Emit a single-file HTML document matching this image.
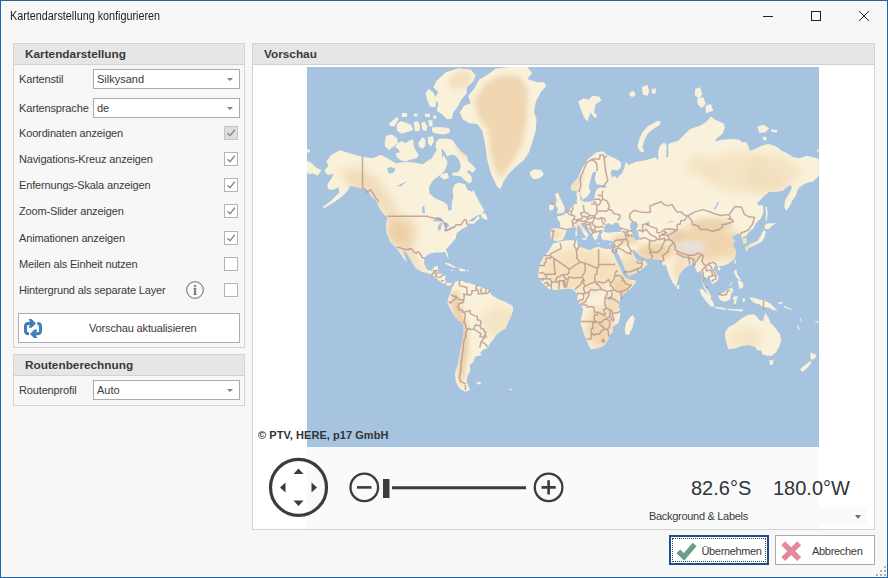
<!DOCTYPE html>
<html lang="de"><head><meta charset="utf-8"><title>Kartendarstellung konfigurieren</title>
<style>
*{box-sizing:border-box;margin:0;padding:0}
html,body{width:888px;height:578px;overflow:hidden;background:#f7f7f7}
body{font-family:"Liberation Sans","DejaVu Sans",sans-serif;font-size:11px;color:#3a3a3a;position:relative}
.abs{position:absolute}
#win{position:absolute;left:0;top:0;width:888px;height:578px;border:1px solid #1b66b3;border-top-color:#2a5f9a;background:#f7f7f7}
.t{position:absolute;white-space:nowrap;line-height:14px;height:14px;letter-spacing:-0.15px}
.grp{position:absolute;border:1px solid #d2d2d2;background:#f7f7f7}
.hd{position:absolute;left:0;top:0;right:0;height:21px;background:#e6e6e6;border-bottom:1px solid #d2d2d2}
.hd span{position:absolute;left:11px;top:3px;font-weight:bold;font-size:11.8px;line-height:14px;color:#3a3a3a;white-space:nowrap}
.cb{position:absolute;height:20px;background:#fff;border:1px solid #ababab}
.cb span{position:absolute;left:3px;top:2px;line-height:14px;white-space:nowrap}
.cb i{position:absolute;right:6.5px;top:8px;width:0;height:0;border-left:3.5px solid transparent;border-right:3.5px solid transparent;border-top:3.5px solid #808080}
.ck{position:absolute;left:223px;width:14px;height:14px;background:#fff;border:1px solid #b4b4b4}
.ck.dis{background:#dedede;border-color:#c4c4c4}
.ck svg{position:absolute;left:0;top:0}
.btn{position:absolute;background:#fff;border:1px solid #ababab}
</style></head><body>
<div id="win">
<div class="t" style="left:9px;top:7.700px;font-size:12px;letter-spacing:0;transform:scaleX(.9);transform-origin:0 0;color:#222" id="title">Kartendarstellung konfigurieren</div>
<svg class="abs" style="left:754px;top:-1px" width="132" height="32" viewBox="755 0 132 32" fill="none" stroke="#222" stroke-width="1">
<path d="M763 16.5H773"/><rect x="811.5" y="11.5" width="9" height="9"/><path d="M859 11L869 21M869 11L859 21"/></svg>

<!-- left group 1 -->
<div class="grp" style="left:12px;top:42px;width:232px;height:305px">
 <div class="hd"><span id="h1">Kartendarstellung</span></div>
</div>
<div class="t" style="left:18px;top:71px" id="l1">Kartenstil</div>
<div class="cb" style="left:92px;top:68px;width:147px"><span>Silkysand</span><i></i></div>
<div class="t" style="left:18px;top:100px" id="l2">Kartensprache</div>
<div class="cb" style="left:92px;top:97px;width:147px"><span>de</span><i></i></div>
<div class="t" style="left:18px;top:125px" id="l3">Koordinaten anzeigen</div>
<div class="t" style="left:18px;top:151px" id="l4">Navigations-Kreuz anzeigen</div>
<div class="t" style="left:18px;top:177px" id="l5">Enfernungs-Skala anzeigen</div>
<div class="t" style="left:18px;top:203px" id="l6">Zoom-Slider anzeigen</div>
<div class="t" style="left:18px;top:230px" id="l7">Animationen anzeigen</div>
<div class="t" style="left:18px;top:256px" id="l8">Meilen als Einheit nutzen</div>
<div class="t" style="left:18px;top:282px" id="l9">Hintergrund als separate Layer</div>
<div class="ck dis" style="top:125px"><svg width="12" height="12" viewBox="0 0 12 12"><path d="M2.5 6.2L5 8.8L9.8 2.8" fill="none" stroke="#8a8a8a" stroke-width="1.4"/></svg></div>
<div class="ck" style="top:151px"><svg width="12" height="12" viewBox="0 0 12 12"><path d="M2.5 6.2L5 8.8L9.8 2.8" fill="none" stroke="#8a8a8a" stroke-width="1.4"/></svg></div>
<div class="ck" style="top:177px"><svg width="12" height="12" viewBox="0 0 12 12"><path d="M2.5 6.2L5 8.8L9.8 2.8" fill="none" stroke="#8a8a8a" stroke-width="1.4"/></svg></div>
<div class="ck" style="top:203px"><svg width="12" height="12" viewBox="0 0 12 12"><path d="M2.5 6.2L5 8.8L9.8 2.8" fill="none" stroke="#8a8a8a" stroke-width="1.4"/></svg></div>
<div class="ck" style="top:230px"><svg width="12" height="12" viewBox="0 0 12 12"><path d="M2.5 6.2L5 8.8L9.8 2.8" fill="none" stroke="#8a8a8a" stroke-width="1.4"/></svg></div>
<div class="ck" style="top:256px"></div>
<div class="ck" style="top:282px"></div>
<svg class="abs" style="left:183.100px;top:278.200px" width="22" height="22" viewBox="0 0 22 22"><circle cx="11" cy="11" r="8.3" fill="#fbfbfb" stroke="#888" stroke-width="1.3"/><text x="11" y="15.800" font-family="Liberation Serif,serif" font-weight="bold" font-size="14" text-anchor="middle" fill="#777">i</text></svg>
<div class="btn" style="left:17px;top:312px;width:222px;height:30px">
 <svg class="abs" style="left:4.900px;top:4.900px" width="18" height="19.4" viewBox="0 0 18 19.4" fill="none" stroke="#3f7dbb" stroke-width="3"><path d="M7 4.600H4.500Q1.500 4.600 1.500 7.600V11.800Q1.500 14.800 4.500 14.800H5"/><path d="M11 14.800H13.500Q16.500 14.800 16.500 11.800V7.600Q16.500 4.600 13.500 4.600H13.300"/><path d="M4.600 0H7.600L12 4.400L7.600 8.800H4.600L6.600 4.400Z" fill="#3f7dbb" stroke="none"/><path d="M13.400 10.600H10.400L6 15L10.400 19.400H13.400L11.400 15Z" fill="#3f7dbb" stroke="none"/></svg>
 <div class="t" style="left:70px;top:7px" id="b1">Vorschau aktualisieren</div>
</div>

<!-- left group 2 -->
<div class="grp" style="left:12px;top:353px;width:232px;height:52px">
 <div class="hd"><span id="h2">Routenberechnung</span></div>
</div>
<div class="t" style="left:18px;top:382px" id="l10">Routenprofil</div>
<div class="cb" style="left:92px;top:379px;width:147px"><span>Auto</span><i></i></div>

<!-- right group -->
<div class="grp" style="left:251px;top:42px;width:623px;height:487px;background:#fff">
 <div class="hd"><span id="h3">Vorschau</span></div>
</div>
<div class="abs" style="left:306px;top:446px;width:512px;height:82px;background:#f8fafc"></div>
<!--MAP-->
<svg class="abs" id="map" style="left:306px;top:66px" width="512" height="380" viewBox="0 0 512 380">
<defs><filter id="fb1" x="-20%" y="-20%" width="140%" height="140%"><feGaussianBlur stdDeviation="5"/></filter><filter id="fb2" x="-20%" y="-20%" width="140%" height="140%"><feGaussianBlur stdDeviation="2.5"/></filter><clipPath id="lc"><path d="M152.8,45.3 157.0,38.7 163.7,36.2 161.2,28.7 167.0,22.0 172.0,12.8 180.3,7.8 188.7,1.7 202.0,0.0 220.3,0.0 225.3,6.2 220.3,12.0 230.3,15.3 237.0,15.3 239.5,18.7 233.7,25.3 228.7,35.3 227.0,45.3 229.5,52.0 228.7,63.7 225.3,75.3 222.0,85.3 217.0,93.0 209.0,99.5 201.5,107.0 196.5,114.5 193.5,122.0 190.0,119.5 184.0,107.0 180.0,92.0 179.5,87.0 177.8,75.3 175.3,63.7 170.3,57.0 162.0,56.2 155.3,52.0ZM24.0,88.0 33.2,83.3 42.3,86.3 54.8,89.7 65.7,91.3 74.0,87.7 79.0,90.5 89.0,96.3 99.0,94.7 107.3,95.5 115.7,97.2 118.0,95.5 124.7,91.3 129.7,83.0 132.2,78.0 134.7,84.7 135.5,91.3 136.9,88.0 140.6,95.5 138.1,103.0 133.1,108.0 126.2,113.0 122.2,119.7 122.2,126.3 128.0,131.3 136.3,134.7 140.5,138.0 141.3,143.8 144.7,143.0 144.7,136.3 146.3,129.7 145.5,123.0 147.2,118.0 151.3,115.5 158.0,117.2 160.5,123.0 164.7,124.7 166.3,123.0 169.7,129.7 173.0,136.3 177.2,143.0 174.7,147.2 169.7,148.8 165.5,151.3 161.3,154.3 166.3,154.3 171.3,148.8 173.0,151.3 168.8,154.7 166.3,157.2 161.3,156.3 159.7,159.7 154.7,162.2 149.7,166.3 148.8,171.3 144.7,176.3 138.8,182.2 140.5,186.3 141.7,192.2 139.7,188.8 138.0,184.7 134.7,185.5 128.0,185.5 121.3,187.2 117.2,191.3 117.2,197.2 120.5,203.0 124.7,203.8 127.2,199.7 130.5,198.8 131.3,203.0 130.5,206.3 136.3,207.2 138.8,208.8 138.0,213.0 139.7,216.3 143.0,216.0 145.5,216.3 144.7,218.0 141.3,218.8 137.2,217.2 131.3,213.0 126.3,208.8 121.3,206.3 114.7,204.7 108.8,201.3 104.7,194.7 99.7,186.3 95.5,183.0 98.0,189.7 100.0,195.5 96.3,191.3 92.2,184.7 88.8,180.5 83.0,174.7 79.7,166.3 78.8,158.0 80.5,149.7 78.2,148.8 72.3,141.3 69.8,134.7 64.8,129.7 60.7,123.8 54.8,121.7 49.0,120.0 43.2,118.8 40.7,123.8 34.8,129.7 25.7,136.3 16.5,141.3 15.7,140.0 24.0,133.8 32.3,125.5 31.5,120.0 26.5,122.7 21.0,122.2 20.3,117.2 24.0,112.2 26.5,106.7 20.7,108.0 17.3,103.8 21.5,98.8 19.3,94.7ZM0.0,93.8 4.0,95.5 9.0,100.5 14.3,103.0 10.7,108.8 5.7,106.3 1.5,107.2 0.0,104.7ZM0.0,82.2 3.2,82.7 2.7,85.5 0.0,85.5ZM173.8,148.0 177.2,145.5 179.7,148.8 180.5,153.0 177.2,152.2 174.7,150.5ZM137.2,196.3 141.3,196.0 146.3,198.8 150.5,201.0 146.3,200.5 141.3,198.3ZM151.3,201.3 158.0,202.2 158.8,204.3 153.0,204.3ZM143.8,202.7 146.3,202.7 146.3,203.7 143.8,203.7ZM159.7,203.3 161.7,203.3 161.7,204.3 159.7,204.3ZM128.8,75.5 131.9,71.8 138.8,71.5 145.6,73.0 148.8,78.0 153.8,84.2 160.0,89.2 161.2,94.2 166.9,99.2 168.8,102.0 165.6,106.1 161.9,103.0 160.0,104.9 164.4,109.2 165.0,114.2 161.9,116.5 157.5,113.0 153.8,109.2 145.6,108.6 145.0,106.1 151.2,104.9 153.8,100.5 153.1,95.5 151.2,91.8 147.5,88.0 143.8,88.0 140.0,89.5 138.1,85.5 135.0,81.8 133.1,84.5 130.6,84.9 128.8,80.5ZM133.8,106.8 140.6,106.1 141.9,111.1 136.9,112.4 133.1,109.9ZM129.7,13.7 138.8,5.3 151.3,1.2 163.8,2.8 168.8,8.7 165.5,15.3 159.7,20.3 159.7,26.2 154.7,32.0 151.3,38.7 146.3,45.3 144.7,52.0 139.7,52.0 134.7,47.0 129.7,43.7 131.3,37.0 128.0,30.3 131.3,25.3 126.3,20.3ZM121.3,22.0 126.3,25.3 129.7,33.7 128.0,40.3 123.0,39.5 119.7,32.0 118.8,26.2ZM79.2,68.6 84.9,67.4 89.9,71.1 91.1,75.5 86.8,79.2 81.8,83.0 78.0,79.2 77.8,74.2ZM89.9,76.8 94.2,74.2 99.2,76.1 103.0,73.0 106.1,72.4 106.8,79.2 109.2,84.2 111.8,88.0 109.9,91.1 104.2,92.4 99.2,94.2 94.2,93.6 89.9,90.5 88.6,86.1 93.0,85.5 91.1,81.8 88.0,80.5ZM111.1,76.1 115.5,69.9 118.6,73.0 118.0,79.2 115.5,81.8 112.4,79.9ZM120.8,69.9 126.1,69.2 127.0,74.2 124.2,79.2 121.1,76.8ZM124.9,60.5 130.5,59.9 138.0,60.5 143.0,61.8 142.4,66.1 136.8,67.4 130.5,66.8 125.5,65.5ZM81.8,56.8 89.9,49.9 91.8,51.8 87.4,59.2 83.6,59.2ZM89.9,56.8 93.6,54.2 98.6,55.5 104.2,58.0 106.1,63.0 100.5,64.9 94.2,66.8 89.9,63.6ZM106.8,54.9 111.1,54.2 113.0,59.2 112.4,64.2 108.0,64.2ZM114.2,55.5 118.0,54.9 120.5,59.2 119.2,64.2 115.5,63.0ZM121.1,53.0 125.5,53.6 125.5,59.2 122.4,59.2ZM94.9,46.1 99.9,46.1 99.9,49.9 94.9,49.9ZM106.8,46.8 110.5,46.8 110.5,49.2 106.8,49.2ZM118.0,46.8 123.0,46.8 123.0,49.9 118.0,49.9ZM126.1,48.6 129.2,48.6 129.2,51.8 126.1,51.8ZM145.5,218.8 148.8,214.7 153.8,213.0 158.0,215.5 163.0,216.3 170.5,218.8 176.3,221.3 181.3,222.2 184.7,228.0 191.3,232.2 198.0,234.7 205.5,238.8 206.3,243.0 203.8,249.7 201.3,254.7 198.8,261.3 194.7,263.8 189.7,267.2 187.2,271.3 183.0,276.3 180.5,281.3 175.5,283.0 173.0,286.3 175.5,288.0 168.0,289.7 166.3,294.7 163.0,298.0 163.0,304.7 160.5,308.8 159.7,314.7 163.0,323.0 158.0,324.7 152.2,321.3 148.8,314.7 148.0,306.3 150.5,298.0 152.2,289.7 153.8,281.3 155.5,273.0 156.7,266.3 156.3,258.0 153.0,254.7 148.0,249.7 143.8,243.0 140.5,236.3 141.3,231.3 143.8,224.7ZM169.7,315.0 173.8,314.7 173.8,317.2 170.0,317.3ZM202.2,321.7 204.7,322.0 204.7,323.3 202.5,323.0ZM246.0,176.5 241.8,184.0 236.8,189.8 232.7,197.3 231.8,204.0 231.3,209.0 233.5,214.0 236.8,217.3 241.0,221.5 246.0,223.2 254.3,222.3 261.0,221.5 266.0,222.3 269.3,225.7 271.0,227.3 270.2,232.3 272.7,237.3 276.0,241.3 275.2,248.0 273.0,254.7 275.2,261.3 278.5,271.3 281.8,278.8 283.5,282.2 291.0,281.3 296.8,278.8 301.0,273.0 302.7,268.0 306.0,264.7 305.2,260.5 311.0,256.3 312.7,251.3 313.5,245.5 311.8,239.7 312.7,233.0 314.3,229.7 321.0,223.0 322.7,223.2 327.7,216.5 329.3,214.0 327.7,213.2 322.7,212.7 319.0,211.0 316.0,207.7 313.2,201.0 309.8,194.3 306.7,187.3 308.0,184.0 306.8,181.5 302.7,182.3 296.0,181.5 291.0,179.8 287.7,180.7 282.7,183.2 276.0,180.7 271.0,179.8 270.2,174.0 269.3,172.3 268.5,173.2 259.3,173.2 252.7,174.8ZM326.0,248.0 327.7,252.2 325.2,261.3 321.8,268.0 318.5,267.2 317.7,262.2 319.3,255.5 322.7,250.5ZM248.5,174.0 246.0,173.0 243.5,169.2 243.5,162.4 247.9,161.1 253.5,161.8 252.9,155.5 249.8,151.1 250.4,149.2 255.4,148.6 260.4,144.9 263.5,141.8 269.3,135.5 270.2,131.3 269.3,126.3 271.8,123.0 273.5,128.0 273.0,133.0 275.2,132.2 274.0,128.0 273.0,123.8 269.3,124.3 264.7,123.5 263.5,120.5 265.2,117.2 271.0,110.5 275.2,101.3 281.0,92.2 289.3,85.5 296.0,84.3 300.2,88.0 307.7,91.3 313.5,94.7 314.3,99.7 311.0,103.5 305.2,102.7 303.5,105.5 305.2,110.7 307.7,108.8 310.2,111.7 312.3,108.3 315.3,106.3 317.3,100.5 318.7,95.0 321.8,98.0 325.2,96.3 329.3,94.7 336.0,93.8 343.0,92.0 348.0,90.3 351.3,93.0 351.3,83.7 353.0,78.7 357.2,75.3 359.7,78.7 359.3,90.3 361.3,90.3 361.3,77.0 366.3,75.3 371.3,73.7 378.0,67.0 383.0,62.0 393.0,58.7 399.7,54.5 403.8,49.5 408.0,52.8 416.3,56.2 418.0,60.3 415.5,67.0 409.7,71.2 408.0,74.5 414.7,72.8 424.7,72.0 432.2,72.8 434.7,75.3 439.7,75.3 443.0,83.7 448.0,82.0 454.7,78.7 461.3,77.0 468.0,78.7 474.7,83.7 481.3,87.0 486.3,90.3 493.0,91.2 499.7,88.7 506.3,90.3 511.8,92.0 511.8,108.8 505.7,114.7 500.7,115.5 495.7,118.0 492.3,120.5 490.7,123.0 489.0,128.0 485.7,133.0 482.3,139.7 479.0,143.8 477.3,139.7 478.2,133.0 482.3,126.3 484.8,121.3 484.0,118.0 479.0,120.5 475.7,123.8 469.0,124.7 462.3,124.7 457.3,128.8 453.2,133.0 449.8,136.3 452.3,138.8 455.7,138.0 456.5,144.7 454.0,151.3 449.0,156.3 446.5,161.3 442.3,164.7 439.0,169.0 439.8,175.7 436.5,177.3 435.3,172.3 434.0,168.2 431.5,166.5 427.3,168.2 424.8,170.7 428.2,174.0 425.7,177.3 428.2,182.3 429.0,186.3 427.7,191.3 424.3,194.7 419.8,197.5 415.7,198.8 412.3,199.3 411.0,199.3 408.2,198.3 406.5,201.3 407.7,203.8 410.2,207.2 411.5,210.5 411.0,213.3 408.2,215.5 405.5,217.2 404.0,215.0 403.2,213.0 401.0,211.3 398.5,210.0 396.5,210.8 396.0,214.7 396.8,218.0 399.3,221.3 401.8,224.7 403.5,228.0 404.3,231.3 402.3,231.3 401.0,228.0 399.0,223.8 396.8,220.5 395.7,216.3 395.2,214.7 395.7,210.5 394.8,206.3 393.5,203.3 391.5,205.5 389.8,204.8 388.5,201.7 386.7,196.8 384.0,197.8 381.5,198.5 379.7,199.7 375.5,203.0 372.2,208.0 370.5,214.7 368.8,219.7 365.5,215.5 362.2,208.0 359.7,201.3 358.8,197.2 356.3,198.8 354.7,195.5 353.8,193.0 349.7,192.2 343.0,192.2 338.0,191.3 333.0,188.8 327.2,183.0 324.7,183.8 327.2,188.8 329.7,192.7 333.0,194.7 336.3,192.2 338.0,193.8 340.5,197.2 336.3,201.3 328.8,206.3 323.0,208.3 321.7,209.3 318.8,203.8 315.5,196.0 311.7,188.0 308.3,182.2 304.5,186.2 305.3,183.4 306.5,179.7 307.5,175.9 308.3,173.4 306.3,174.2 303.0,174.0 300.5,173.0 298.0,173.4 295.5,172.6 294.2,170.5 293.8,167.2 295.1,165.5 296.3,164.7 294.7,164.9 292.2,165.7 291.5,167.6 290.5,169.8 290.1,172.2 288.4,173.4 287.6,172.6 286.3,170.7 285.1,168.0 283.8,165.9 281.3,162.2 278.0,158.8 275.1,156.3 273.8,157.0 276.3,160.5 278.8,163.8 281.3,166.8 282.0,168.0 280.7,168.5 280.3,171.2 279.2,170.5 277.3,167.7 275.2,164.3 273.2,160.2 272.3,158.0 269.7,160.5 263.8,160.5 260.5,161.5 259.7,163.4 257.9,168.0 256.0,172.4 251.6,174.2ZM222.7,104.7 227.7,102.2 234.3,103.0 236.8,107.2 232.7,111.3 226.8,112.2 223.5,108.8ZM247.9,127.4 251.0,125.5 252.9,130.5 256.0,136.8 257.9,141.8 256.6,145.5 249.8,146.8 251.0,141.8 248.5,138.0 249.8,133.0ZM242.2,138.6 245.4,135.5 247.5,138.6 246.0,143.0 242.2,143.6ZM274.2,171.2 279.7,170.9 278.8,173.0 275.5,172.6ZM268.4,163.8 270.1,163.7 270.1,169.2 268.6,169.2ZM268.8,160.5 270.0,160.5 270.0,163.2 269.0,163.2ZM289.7,175.9 293.0,175.9 293.0,176.8 289.7,176.8ZM301.8,176.8 304.2,175.9 304.0,177.2 301.9,177.3ZM322.2,25.7 326.3,23.7 328.8,27.8 325.5,30.3 322.7,28.7ZM334.7,20.3 340.5,17.8 342.2,23.7 340.5,28.7 336.0,27.8ZM344.7,22.0 348.8,21.2 348.8,26.2 345.0,26.7ZM388.0,22.0 393.0,20.3 395.5,27.0 392.2,31.2 388.0,28.7ZM390.5,31.2 396.3,30.3 398.8,37.0 394.7,41.2 390.5,37.0ZM398.8,38.7 403.8,37.0 406.3,43.7 398.8,46.2ZM350.5,53.7 353.8,54.5 353.0,57.8 346.3,62.0 340.5,67.0 337.2,73.7 335.5,80.3 337.2,85.3 333.0,84.5 330.5,79.5 332.2,72.0 335.5,65.3 340.5,59.5 346.3,56.2ZM450.5,59.5 456.3,57.8 462.2,61.2 458.8,65.3 452.2,65.7ZM463.8,62.3 470.5,63.3 469.7,65.7 464.7,65.0ZM455.5,69.5 459.7,70.3 459.3,73.7 456.0,72.8ZM510.3,82.0 511.8,82.0 511.8,84.7 510.3,84.7ZM271.2,34.5 277.0,31.2 282.0,32.8 285.3,28.7 292.0,29.5 294.5,33.7 288.7,37.0 287.0,45.3 290.3,48.7 287.8,51.2 283.7,45.3 280.3,54.5 277.0,50.3 273.7,42.0ZM458.2,139.7 459.8,139.7 460.7,146.3 459.8,153.8 458.7,153.8 459.0,146.3ZM457.3,159.0 459.8,156.5 469.0,156.0 464.8,159.0 461.5,162.3 458.2,162.3ZM456.5,163.2 459.0,164.8 457.3,170.7 454.8,174.8 449.0,177.7 443.2,180.3 439.8,182.3 439.3,179.8 444.0,176.5 450.7,174.0 454.0,168.2ZM438.2,179.8 441.0,181.0 440.7,184.3 438.7,183.7ZM427.3,193.0 428.8,193.3 428.7,197.2 427.5,196.8ZM411.0,200.3 413.2,200.0 413.3,203.0 411.8,203.8 410.8,202.5ZM426.9,203.4 429.4,203.0 430.2,207.2 432.3,210.5 434.2,212.2 432.3,213.2 429.0,209.7 427.3,206.3ZM430.7,213.2 434.0,214.0 436.5,217.2 435.7,221.3 432.3,221.8 431.5,218.0ZM422.3,218.4 425.2,215.1 425.8,215.5 422.9,219.0ZM412.3,227.3 416.5,225.7 420.7,222.3 424.8,220.7 426.5,223.2 424.0,227.3 423.2,232.3 418.2,234.8 413.2,233.2 411.5,229.8ZM392.3,222.3 395.7,222.3 401.5,229.0 406.5,235.7 407.0,239.8 404.0,239.8 398.2,233.2 394.0,227.3ZM407.7,239.8 413.2,240.3 419.0,241.5 418.7,242.7 412.3,242.0 407.7,241.0ZM426.5,229.8 431.5,229.0 429.8,231.5 429.0,237.3 426.5,236.5 427.3,233.2 425.7,232.3ZM369.7,218.0 372.2,218.3 372.2,222.2 370.0,221.7ZM442.2,230.5 446.3,230.5 451.3,232.2 458.0,233.8 463.0,236.3 467.2,240.5 470.5,243.8 466.3,243.0 461.3,240.5 456.3,240.5 452.2,237.2 448.0,236.3 444.7,233.8ZM420.5,241.7 428.8,242.2 436.3,243.0 436.0,244.3 428.8,243.7 420.5,243.0ZM431.3,242.7 435.0,241.7 434.7,244.0 431.7,244.7ZM435.5,231.3 438.0,231.3 437.7,235.0 435.7,234.7ZM471.3,235.5 475.5,234.7 475.8,236.3 471.7,237.2ZM477.2,238.8 484.7,242.2 484.3,243.3 476.8,240.0ZM418.0,265.5 421.3,260.5 428.8,256.3 434.7,251.3 441.3,247.7 447.2,247.2 450.5,250.5 453.0,253.8 456.3,253.8 457.2,248.8 458.8,246.3 461.3,250.5 463.8,256.3 468.8,261.3 473.0,267.2 474.3,273.0 472.2,279.7 468.8,285.5 464.7,288.8 459.7,288.8 455.5,287.2 453.8,283.0 450.5,283.8 448.0,279.7 441.3,278.0 434.7,278.8 428.8,281.3 421.3,282.2 419.7,276.3 418.0,270.5ZM462.2,293.3 466.7,293.3 465.5,298.0 463.0,298.0ZM502.2,282.2 503.8,285.5 509.7,288.0 508.0,291.3 504.7,293.0 503.0,289.7 503.8,287.2ZM493.0,302.2 497.2,298.8 502.2,294.7 504.7,293.8 503.0,298.0 498.8,302.2 495.5,304.7ZM489.7,258.8 491.0,258.5 493.0,262.7 492.0,263.0ZM493.0,251.3 494.0,251.3 495.0,254.7 494.0,254.7ZM508.0,254.7 511.7,254.0 511.7,255.3 508.3,255.7Z"/></clipPath></defs>
<rect width="512" height="380" fill="#a6c4df"/>
<path d="M152.8,45.3 157.0,38.7 163.7,36.2 161.2,28.7 167.0,22.0 172.0,12.8 180.3,7.8 188.7,1.7 202.0,0.0 220.3,0.0 225.3,6.2 220.3,12.0 230.3,15.3 237.0,15.3 239.5,18.7 233.7,25.3 228.7,35.3 227.0,45.3 229.5,52.0 228.7,63.7 225.3,75.3 222.0,85.3 217.0,93.0 209.0,99.5 201.5,107.0 196.5,114.5 193.5,122.0 190.0,119.5 184.0,107.0 180.0,92.0 179.5,87.0 177.8,75.3 175.3,63.7 170.3,57.0 162.0,56.2 155.3,52.0ZM24.0,88.0 33.2,83.3 42.3,86.3 54.8,89.7 65.7,91.3 74.0,87.7 79.0,90.5 89.0,96.3 99.0,94.7 107.3,95.5 115.7,97.2 118.0,95.5 124.7,91.3 129.7,83.0 132.2,78.0 134.7,84.7 135.5,91.3 136.9,88.0 140.6,95.5 138.1,103.0 133.1,108.0 126.2,113.0 122.2,119.7 122.2,126.3 128.0,131.3 136.3,134.7 140.5,138.0 141.3,143.8 144.7,143.0 144.7,136.3 146.3,129.7 145.5,123.0 147.2,118.0 151.3,115.5 158.0,117.2 160.5,123.0 164.7,124.7 166.3,123.0 169.7,129.7 173.0,136.3 177.2,143.0 174.7,147.2 169.7,148.8 165.5,151.3 161.3,154.3 166.3,154.3 171.3,148.8 173.0,151.3 168.8,154.7 166.3,157.2 161.3,156.3 159.7,159.7 154.7,162.2 149.7,166.3 148.8,171.3 144.7,176.3 138.8,182.2 140.5,186.3 141.7,192.2 139.7,188.8 138.0,184.7 134.7,185.5 128.0,185.5 121.3,187.2 117.2,191.3 117.2,197.2 120.5,203.0 124.7,203.8 127.2,199.7 130.5,198.8 131.3,203.0 130.5,206.3 136.3,207.2 138.8,208.8 138.0,213.0 139.7,216.3 143.0,216.0 145.5,216.3 144.7,218.0 141.3,218.8 137.2,217.2 131.3,213.0 126.3,208.8 121.3,206.3 114.7,204.7 108.8,201.3 104.7,194.7 99.7,186.3 95.5,183.0 98.0,189.7 100.0,195.5 96.3,191.3 92.2,184.7 88.8,180.5 83.0,174.7 79.7,166.3 78.8,158.0 80.5,149.7 78.2,148.8 72.3,141.3 69.8,134.7 64.8,129.7 60.7,123.8 54.8,121.7 49.0,120.0 43.2,118.8 40.7,123.8 34.8,129.7 25.7,136.3 16.5,141.3 15.7,140.0 24.0,133.8 32.3,125.5 31.5,120.0 26.5,122.7 21.0,122.2 20.3,117.2 24.0,112.2 26.5,106.7 20.7,108.0 17.3,103.8 21.5,98.8 19.3,94.7ZM0.0,93.8 4.0,95.5 9.0,100.5 14.3,103.0 10.7,108.8 5.7,106.3 1.5,107.2 0.0,104.7ZM0.0,82.2 3.2,82.7 2.7,85.5 0.0,85.5ZM173.8,148.0 177.2,145.5 179.7,148.8 180.5,153.0 177.2,152.2 174.7,150.5ZM137.2,196.3 141.3,196.0 146.3,198.8 150.5,201.0 146.3,200.5 141.3,198.3ZM151.3,201.3 158.0,202.2 158.8,204.3 153.0,204.3ZM143.8,202.7 146.3,202.7 146.3,203.7 143.8,203.7ZM159.7,203.3 161.7,203.3 161.7,204.3 159.7,204.3ZM128.8,75.5 131.9,71.8 138.8,71.5 145.6,73.0 148.8,78.0 153.8,84.2 160.0,89.2 161.2,94.2 166.9,99.2 168.8,102.0 165.6,106.1 161.9,103.0 160.0,104.9 164.4,109.2 165.0,114.2 161.9,116.5 157.5,113.0 153.8,109.2 145.6,108.6 145.0,106.1 151.2,104.9 153.8,100.5 153.1,95.5 151.2,91.8 147.5,88.0 143.8,88.0 140.0,89.5 138.1,85.5 135.0,81.8 133.1,84.5 130.6,84.9 128.8,80.5ZM133.8,106.8 140.6,106.1 141.9,111.1 136.9,112.4 133.1,109.9ZM129.7,13.7 138.8,5.3 151.3,1.2 163.8,2.8 168.8,8.7 165.5,15.3 159.7,20.3 159.7,26.2 154.7,32.0 151.3,38.7 146.3,45.3 144.7,52.0 139.7,52.0 134.7,47.0 129.7,43.7 131.3,37.0 128.0,30.3 131.3,25.3 126.3,20.3ZM121.3,22.0 126.3,25.3 129.7,33.7 128.0,40.3 123.0,39.5 119.7,32.0 118.8,26.2ZM79.2,68.6 84.9,67.4 89.9,71.1 91.1,75.5 86.8,79.2 81.8,83.0 78.0,79.2 77.8,74.2ZM89.9,76.8 94.2,74.2 99.2,76.1 103.0,73.0 106.1,72.4 106.8,79.2 109.2,84.2 111.8,88.0 109.9,91.1 104.2,92.4 99.2,94.2 94.2,93.6 89.9,90.5 88.6,86.1 93.0,85.5 91.1,81.8 88.0,80.5ZM111.1,76.1 115.5,69.9 118.6,73.0 118.0,79.2 115.5,81.8 112.4,79.9ZM120.8,69.9 126.1,69.2 127.0,74.2 124.2,79.2 121.1,76.8ZM124.9,60.5 130.5,59.9 138.0,60.5 143.0,61.8 142.4,66.1 136.8,67.4 130.5,66.8 125.5,65.5ZM81.8,56.8 89.9,49.9 91.8,51.8 87.4,59.2 83.6,59.2ZM89.9,56.8 93.6,54.2 98.6,55.5 104.2,58.0 106.1,63.0 100.5,64.9 94.2,66.8 89.9,63.6ZM106.8,54.9 111.1,54.2 113.0,59.2 112.4,64.2 108.0,64.2ZM114.2,55.5 118.0,54.9 120.5,59.2 119.2,64.2 115.5,63.0ZM121.1,53.0 125.5,53.6 125.5,59.2 122.4,59.2ZM94.9,46.1 99.9,46.1 99.9,49.9 94.9,49.9ZM106.8,46.8 110.5,46.8 110.5,49.2 106.8,49.2ZM118.0,46.8 123.0,46.8 123.0,49.9 118.0,49.9ZM126.1,48.6 129.2,48.6 129.2,51.8 126.1,51.8ZM145.5,218.8 148.8,214.7 153.8,213.0 158.0,215.5 163.0,216.3 170.5,218.8 176.3,221.3 181.3,222.2 184.7,228.0 191.3,232.2 198.0,234.7 205.5,238.8 206.3,243.0 203.8,249.7 201.3,254.7 198.8,261.3 194.7,263.8 189.7,267.2 187.2,271.3 183.0,276.3 180.5,281.3 175.5,283.0 173.0,286.3 175.5,288.0 168.0,289.7 166.3,294.7 163.0,298.0 163.0,304.7 160.5,308.8 159.7,314.7 163.0,323.0 158.0,324.7 152.2,321.3 148.8,314.7 148.0,306.3 150.5,298.0 152.2,289.7 153.8,281.3 155.5,273.0 156.7,266.3 156.3,258.0 153.0,254.7 148.0,249.7 143.8,243.0 140.5,236.3 141.3,231.3 143.8,224.7ZM169.7,315.0 173.8,314.7 173.8,317.2 170.0,317.3ZM202.2,321.7 204.7,322.0 204.7,323.3 202.5,323.0ZM246.0,176.5 241.8,184.0 236.8,189.8 232.7,197.3 231.8,204.0 231.3,209.0 233.5,214.0 236.8,217.3 241.0,221.5 246.0,223.2 254.3,222.3 261.0,221.5 266.0,222.3 269.3,225.7 271.0,227.3 270.2,232.3 272.7,237.3 276.0,241.3 275.2,248.0 273.0,254.7 275.2,261.3 278.5,271.3 281.8,278.8 283.5,282.2 291.0,281.3 296.8,278.8 301.0,273.0 302.7,268.0 306.0,264.7 305.2,260.5 311.0,256.3 312.7,251.3 313.5,245.5 311.8,239.7 312.7,233.0 314.3,229.7 321.0,223.0 322.7,223.2 327.7,216.5 329.3,214.0 327.7,213.2 322.7,212.7 319.0,211.0 316.0,207.7 313.2,201.0 309.8,194.3 306.7,187.3 308.0,184.0 306.8,181.5 302.7,182.3 296.0,181.5 291.0,179.8 287.7,180.7 282.7,183.2 276.0,180.7 271.0,179.8 270.2,174.0 269.3,172.3 268.5,173.2 259.3,173.2 252.7,174.8ZM326.0,248.0 327.7,252.2 325.2,261.3 321.8,268.0 318.5,267.2 317.7,262.2 319.3,255.5 322.7,250.5ZM248.5,174.0 246.0,173.0 243.5,169.2 243.5,162.4 247.9,161.1 253.5,161.8 252.9,155.5 249.8,151.1 250.4,149.2 255.4,148.6 260.4,144.9 263.5,141.8 269.3,135.5 270.2,131.3 269.3,126.3 271.8,123.0 273.5,128.0 273.0,133.0 275.2,132.2 274.0,128.0 273.0,123.8 269.3,124.3 264.7,123.5 263.5,120.5 265.2,117.2 271.0,110.5 275.2,101.3 281.0,92.2 289.3,85.5 296.0,84.3 300.2,88.0 307.7,91.3 313.5,94.7 314.3,99.7 311.0,103.5 305.2,102.7 303.5,105.5 305.2,110.7 307.7,108.8 310.2,111.7 312.3,108.3 315.3,106.3 317.3,100.5 318.7,95.0 321.8,98.0 325.2,96.3 329.3,94.7 336.0,93.8 343.0,92.0 348.0,90.3 351.3,93.0 351.3,83.7 353.0,78.7 357.2,75.3 359.7,78.7 359.3,90.3 361.3,90.3 361.3,77.0 366.3,75.3 371.3,73.7 378.0,67.0 383.0,62.0 393.0,58.7 399.7,54.5 403.8,49.5 408.0,52.8 416.3,56.2 418.0,60.3 415.5,67.0 409.7,71.2 408.0,74.5 414.7,72.8 424.7,72.0 432.2,72.8 434.7,75.3 439.7,75.3 443.0,83.7 448.0,82.0 454.7,78.7 461.3,77.0 468.0,78.7 474.7,83.7 481.3,87.0 486.3,90.3 493.0,91.2 499.7,88.7 506.3,90.3 511.8,92.0 511.8,108.8 505.7,114.7 500.7,115.5 495.7,118.0 492.3,120.5 490.7,123.0 489.0,128.0 485.7,133.0 482.3,139.7 479.0,143.8 477.3,139.7 478.2,133.0 482.3,126.3 484.8,121.3 484.0,118.0 479.0,120.5 475.7,123.8 469.0,124.7 462.3,124.7 457.3,128.8 453.2,133.0 449.8,136.3 452.3,138.8 455.7,138.0 456.5,144.7 454.0,151.3 449.0,156.3 446.5,161.3 442.3,164.7 439.0,169.0 439.8,175.7 436.5,177.3 435.3,172.3 434.0,168.2 431.5,166.5 427.3,168.2 424.8,170.7 428.2,174.0 425.7,177.3 428.2,182.3 429.0,186.3 427.7,191.3 424.3,194.7 419.8,197.5 415.7,198.8 412.3,199.3 411.0,199.3 408.2,198.3 406.5,201.3 407.7,203.8 410.2,207.2 411.5,210.5 411.0,213.3 408.2,215.5 405.5,217.2 404.0,215.0 403.2,213.0 401.0,211.3 398.5,210.0 396.5,210.8 396.0,214.7 396.8,218.0 399.3,221.3 401.8,224.7 403.5,228.0 404.3,231.3 402.3,231.3 401.0,228.0 399.0,223.8 396.8,220.5 395.7,216.3 395.2,214.7 395.7,210.5 394.8,206.3 393.5,203.3 391.5,205.5 389.8,204.8 388.5,201.7 386.7,196.8 384.0,197.8 381.5,198.5 379.7,199.7 375.5,203.0 372.2,208.0 370.5,214.7 368.8,219.7 365.5,215.5 362.2,208.0 359.7,201.3 358.8,197.2 356.3,198.8 354.7,195.5 353.8,193.0 349.7,192.2 343.0,192.2 338.0,191.3 333.0,188.8 327.2,183.0 324.7,183.8 327.2,188.8 329.7,192.7 333.0,194.7 336.3,192.2 338.0,193.8 340.5,197.2 336.3,201.3 328.8,206.3 323.0,208.3 321.7,209.3 318.8,203.8 315.5,196.0 311.7,188.0 308.3,182.2 304.5,186.2 305.3,183.4 306.5,179.7 307.5,175.9 308.3,173.4 306.3,174.2 303.0,174.0 300.5,173.0 298.0,173.4 295.5,172.6 294.2,170.5 293.8,167.2 295.1,165.5 296.3,164.7 294.7,164.9 292.2,165.7 291.5,167.6 290.5,169.8 290.1,172.2 288.4,173.4 287.6,172.6 286.3,170.7 285.1,168.0 283.8,165.9 281.3,162.2 278.0,158.8 275.1,156.3 273.8,157.0 276.3,160.5 278.8,163.8 281.3,166.8 282.0,168.0 280.7,168.5 280.3,171.2 279.2,170.5 277.3,167.7 275.2,164.3 273.2,160.2 272.3,158.0 269.7,160.5 263.8,160.5 260.5,161.5 259.7,163.4 257.9,168.0 256.0,172.4 251.6,174.2ZM222.7,104.7 227.7,102.2 234.3,103.0 236.8,107.2 232.7,111.3 226.8,112.2 223.5,108.8ZM247.9,127.4 251.0,125.5 252.9,130.5 256.0,136.8 257.9,141.8 256.6,145.5 249.8,146.8 251.0,141.8 248.5,138.0 249.8,133.0ZM242.2,138.6 245.4,135.5 247.5,138.6 246.0,143.0 242.2,143.6ZM274.2,171.2 279.7,170.9 278.8,173.0 275.5,172.6ZM268.4,163.8 270.1,163.7 270.1,169.2 268.6,169.2ZM268.8,160.5 270.0,160.5 270.0,163.2 269.0,163.2ZM289.7,175.9 293.0,175.9 293.0,176.8 289.7,176.8ZM301.8,176.8 304.2,175.9 304.0,177.2 301.9,177.3ZM322.2,25.7 326.3,23.7 328.8,27.8 325.5,30.3 322.7,28.7ZM334.7,20.3 340.5,17.8 342.2,23.7 340.5,28.7 336.0,27.8ZM344.7,22.0 348.8,21.2 348.8,26.2 345.0,26.7ZM388.0,22.0 393.0,20.3 395.5,27.0 392.2,31.2 388.0,28.7ZM390.5,31.2 396.3,30.3 398.8,37.0 394.7,41.2 390.5,37.0ZM398.8,38.7 403.8,37.0 406.3,43.7 398.8,46.2ZM350.5,53.7 353.8,54.5 353.0,57.8 346.3,62.0 340.5,67.0 337.2,73.7 335.5,80.3 337.2,85.3 333.0,84.5 330.5,79.5 332.2,72.0 335.5,65.3 340.5,59.5 346.3,56.2ZM450.5,59.5 456.3,57.8 462.2,61.2 458.8,65.3 452.2,65.7ZM463.8,62.3 470.5,63.3 469.7,65.7 464.7,65.0ZM455.5,69.5 459.7,70.3 459.3,73.7 456.0,72.8ZM510.3,82.0 511.8,82.0 511.8,84.7 510.3,84.7ZM271.2,34.5 277.0,31.2 282.0,32.8 285.3,28.7 292.0,29.5 294.5,33.7 288.7,37.0 287.0,45.3 290.3,48.7 287.8,51.2 283.7,45.3 280.3,54.5 277.0,50.3 273.7,42.0ZM458.2,139.7 459.8,139.7 460.7,146.3 459.8,153.8 458.7,153.8 459.0,146.3ZM457.3,159.0 459.8,156.5 469.0,156.0 464.8,159.0 461.5,162.3 458.2,162.3ZM456.5,163.2 459.0,164.8 457.3,170.7 454.8,174.8 449.0,177.7 443.2,180.3 439.8,182.3 439.3,179.8 444.0,176.5 450.7,174.0 454.0,168.2ZM438.2,179.8 441.0,181.0 440.7,184.3 438.7,183.7ZM427.3,193.0 428.8,193.3 428.7,197.2 427.5,196.8ZM411.0,200.3 413.2,200.0 413.3,203.0 411.8,203.8 410.8,202.5ZM426.9,203.4 429.4,203.0 430.2,207.2 432.3,210.5 434.2,212.2 432.3,213.2 429.0,209.7 427.3,206.3ZM430.7,213.2 434.0,214.0 436.5,217.2 435.7,221.3 432.3,221.8 431.5,218.0ZM422.3,218.4 425.2,215.1 425.8,215.5 422.9,219.0ZM412.3,227.3 416.5,225.7 420.7,222.3 424.8,220.7 426.5,223.2 424.0,227.3 423.2,232.3 418.2,234.8 413.2,233.2 411.5,229.8ZM392.3,222.3 395.7,222.3 401.5,229.0 406.5,235.7 407.0,239.8 404.0,239.8 398.2,233.2 394.0,227.3ZM407.7,239.8 413.2,240.3 419.0,241.5 418.7,242.7 412.3,242.0 407.7,241.0ZM426.5,229.8 431.5,229.0 429.8,231.5 429.0,237.3 426.5,236.5 427.3,233.2 425.7,232.3ZM369.7,218.0 372.2,218.3 372.2,222.2 370.0,221.7ZM442.2,230.5 446.3,230.5 451.3,232.2 458.0,233.8 463.0,236.3 467.2,240.5 470.5,243.8 466.3,243.0 461.3,240.5 456.3,240.5 452.2,237.2 448.0,236.3 444.7,233.8ZM420.5,241.7 428.8,242.2 436.3,243.0 436.0,244.3 428.8,243.7 420.5,243.0ZM431.3,242.7 435.0,241.7 434.7,244.0 431.7,244.7ZM435.5,231.3 438.0,231.3 437.7,235.0 435.7,234.7ZM471.3,235.5 475.5,234.7 475.8,236.3 471.7,237.2ZM477.2,238.8 484.7,242.2 484.3,243.3 476.8,240.0ZM418.0,265.5 421.3,260.5 428.8,256.3 434.7,251.3 441.3,247.7 447.2,247.2 450.5,250.5 453.0,253.8 456.3,253.8 457.2,248.8 458.8,246.3 461.3,250.5 463.8,256.3 468.8,261.3 473.0,267.2 474.3,273.0 472.2,279.7 468.8,285.5 464.7,288.8 459.7,288.8 455.5,287.2 453.8,283.0 450.5,283.8 448.0,279.7 441.3,278.0 434.7,278.8 428.8,281.3 421.3,282.2 419.7,276.3 418.0,270.5ZM462.2,293.3 466.7,293.3 465.5,298.0 463.0,298.0ZM502.2,282.2 503.8,285.5 509.7,288.0 508.0,291.3 504.7,293.0 503.0,289.7 503.8,287.2ZM493.0,302.2 497.2,298.8 502.2,294.7 504.7,293.8 503.0,298.0 498.8,302.2 495.5,304.7ZM489.7,258.8 491.0,258.5 493.0,262.7 492.0,263.0ZM493.0,251.3 494.0,251.3 495.0,254.7 494.0,254.7ZM508.0,254.7 511.7,254.0 511.7,255.3 508.3,255.7Z" fill="#faf1da"/>
<g clip-path="url(#lc)"><polygon points="167.0,33.0 178.0,17.0 193.0,8.0 213.0,9.0 221.0,23.0 220.0,53.0 215.0,78.0 205.0,95.0 195.0,111.0 188.0,103.0 183.0,83.0 181.0,63.0 171.0,49.0" fill="#f0d7b2" fill-opacity="1" filter="url(#fb2)"/><polygon points="33.0,103.0 55.0,101.0 71.0,113.0 85.0,133.0 95.0,155.0 103.0,173.0 111.0,195.0 121.0,205.0 113.0,207.0 101.0,195.0 89.0,179.0 81.0,159.0 75.0,143.0 61.0,127.0 41.0,119.0" fill="#ecd2aa" fill-opacity="0.7" filter="url(#fb1)"/><ellipse cx="95.0" cy="165.0" rx="15" ry="15" fill="#edd3aa" fill-opacity="0.85" filter="url(#fb1)" transform="rotate(0 95.0 165.0)"/><ellipse cx="91.0" cy="165.0" rx="7" ry="10" fill="#e9cca2" fill-opacity="0.7" filter="url(#fb2)" transform="rotate(0 91.0 165.0)"/><polygon points="145.0,225.0 151.0,223.0 155.0,243.0 161.0,261.0 161.0,283.0 157.0,311.0 153.0,321.0 151.0,303.0 153.0,278.0 153.0,263.0 145.0,243.0" fill="#e9cca2" fill-opacity="0.9" filter="url(#fb2)"/><ellipse cx="193.0" cy="255.0" rx="18" ry="16" fill="#f1dfbb" fill-opacity="0.7" filter="url(#fb1)" transform="rotate(0 193.0 255.0)"/><ellipse cx="273.0" cy="203.0" rx="40" ry="22" fill="#f3e0b8" fill-opacity="0.9" filter="url(#fb1)" transform="rotate(0 273.0 203.0)"/><ellipse cx="315.0" cy="219.0" rx="9" ry="10" fill="#eccfa2" fill-opacity="0.9" filter="url(#fb2)" transform="rotate(0 315.0 219.0)"/><ellipse cx="293.0" cy="261.0" rx="14" ry="20" fill="#efd4a8" fill-opacity="0.9" filter="url(#fb1)" transform="rotate(0 293.0 261.0)"/><ellipse cx="305.0" cy="238.0" rx="8" ry="10" fill="#efd4a8" fill-opacity="0.7" filter="url(#fb2)" transform="rotate(0 305.0 238.0)"/><ellipse cx="325.0" cy="201.0" rx="14" ry="14" fill="#f1dbb2" fill-opacity="0.9" filter="url(#fb1)" transform="rotate(0 325.0 201.0)"/><ellipse cx="348.0" cy="185.0" rx="18" ry="9" fill="#ecd0a6" fill-opacity="0.9" filter="url(#fb2)" transform="rotate(0 348.0 185.0)"/><ellipse cx="318.0" cy="173.0" rx="14" ry="5" fill="#eed5ae" fill-opacity="0.9" filter="url(#fb2)" transform="rotate(0 318.0 173.0)"/><ellipse cx="398.0" cy="176.0" rx="36" ry="18" fill="#eed4ac" fill-opacity="0.95" filter="url(#fb1)" transform="rotate(0 398.0 176.0)"/><ellipse cx="405.0" cy="158.0" rx="20" ry="7" fill="#ebcfa6" fill-opacity="0.8" filter="url(#fb2)" transform="rotate(0 405.0 158.0)"/><ellipse cx="384.0" cy="179.5" rx="15" ry="6" fill="#e6e1df" fill-opacity="1" filter="url(#fb2)" transform="rotate(5 384.0 179.5)"/><ellipse cx="369.0" cy="169.0" rx="8" ry="5" fill="#e6cba4" fill-opacity="0.8" filter="url(#fb2)" transform="rotate(0 369.0 169.0)"/><ellipse cx="433.0" cy="183.0" rx="14" ry="14" fill="#f0d8b0" fill-opacity="0.7" filter="url(#fb1)" transform="rotate(0 433.0 183.0)"/><ellipse cx="443.0" cy="105.0" rx="50" ry="20" fill="#f3e2c0" fill-opacity="0.85" filter="url(#fb1)" transform="rotate(0 443.0 105.0)"/><ellipse cx="458.0" cy="115.0" rx="22" ry="10" fill="#f0dab4" fill-opacity="0.6" filter="url(#fb1)" transform="rotate(0 458.0 115.0)"/><ellipse cx="450.0" cy="101.0" rx="9" ry="10" fill="#efd8b2" fill-opacity="0.5" filter="url(#fb1)" transform="rotate(0 450.0 101.0)"/><ellipse cx="393.0" cy="98.0" rx="14" ry="10" fill="#f2e0bc" fill-opacity="0.7" filter="url(#fb1)" transform="rotate(0 393.0 98.0)"/><ellipse cx="269.0" cy="118.0" rx="4" ry="14" fill="#efd9b2" fill-opacity="0.8" filter="url(#fb2)" transform="rotate(25 269.0 118.0)"/><ellipse cx="273.0" cy="160.0" rx="8" ry="3" fill="#ecd2aa" fill-opacity="0.8" filter="url(#fb2)" transform="rotate(0 273.0 160.0)"/><ellipse cx="249.0" cy="168.0" rx="6" ry="5" fill="#efd9b2" fill-opacity="0.8" filter="url(#fb2)" transform="rotate(0 249.0 168.0)"/><ellipse cx="373.0" cy="203.0" rx="8" ry="12" fill="#f1dcb6" fill-opacity="0.7" filter="url(#fb2)" transform="rotate(0 373.0 203.0)"/><ellipse cx="438.0" cy="271.0" rx="18" ry="10" fill="#f2e0bc" fill-opacity="0.7" filter="url(#fb1)" transform="rotate(0 438.0 271.0)"/><ellipse cx="153.0" cy="13.0" rx="12" ry="8" fill="#f0dab4" fill-opacity="0.7" filter="url(#fb2)" transform="rotate(-30 153.0 13.0)"/><ellipse cx="156.0" cy="85.0" rx="4" ry="10" fill="#f0dab4" fill-opacity="0.7" filter="url(#fb2)" transform="rotate(-40 156.0 85.0)"/></g>
<path d="M79.9,101.8 83.6,99.9 88.6,101.8 86.8,105.5 81.8,106.8ZM274.0,133.3 277.7,135.0 285.2,134.2 287.7,129.7 288.5,124.7 291.0,121.3 295.2,120.0 299.3,120.8 299.3,119.3 294.3,118.0 289.3,117.2 287.7,111.3 289.3,105.5 287.7,104.3 285.7,105.5 283.5,113.0 281.8,119.7 283.5,124.7 280.2,129.7 276.8,131.7ZM296.8,164.7 297.2,161.3 298.4,158.0 301.3,155.9 304.2,157.6 306.3,157.8 307.6,155.7 311.3,155.9 311.8,157.3 313.2,160.5 314.7,163.4 313.0,165.1 308.0,164.7 303.0,165.8 299.7,165.5ZM323.8,155.5 328.8,154.3 331.3,158.0 329.3,162.2 331.3,166.3 332.7,172.2 328.8,173.5 326.0,168.8 324.3,163.8 323.0,159.7ZM410.7,134.7 412.0,135.5 408.2,143.0 407.0,142.2ZM125.2,154.2 129.4,151.5 133.0,150.0 135.8,153.6 135.1,154.6 131.6,154.6 128.0,154.4ZM131.1,163.6 133.3,163.6 135.1,156.1 133.0,156.1 131.0,159.7ZM135.8,155.7 140.1,155.7 142.2,158.5 139.8,161.2 138.7,161.4 137.2,158.7ZM137.4,164.1 143.6,161.8 143.6,162.6 139.4,164.7ZM142.5,161.0 147.5,159.5 147.5,160.7 143.6,161.2ZM89.6,119.3 95.3,116.3 100.3,114.2 98.1,115.7 93.9,119.3ZM115.2,146.0 118.0,146.0 117.3,138.4 115.2,140.3ZM301.1,229.9 304.4,229.5 303.6,233.1 301.5,233.3ZM339.2,159.7 342.0,157.7 342.8,154.6 339.9,155.0ZM360.5,156.7 362.7,154.0 368.4,154.6 362.7,155.2Z" fill="#a6c4df"/>
<path d="M237.2,188.5 243.6,188.5 243.6,186.9 250.9,183.1 254.3,181.3 253.4,177.2 252.9,176.1M231.8,198.5 237.5,198.5 237.5,195.9 238.9,195.3 238.9,191.2 243.6,191.2 243.6,188.5M243.6,189.1 249.2,192.8 257.7,198.8 260.6,200.8 262.0,201.8 264.2,201.2 266.7,199.1 273.1,195.1 277.3,195.9 290.1,201.2 290.1,200.5 291.6,200.5 291.6,182.1M291.6,197.4 308.5,197.4M268.2,173.0 267.7,176.8 266.7,178.4 268.8,181.3 269.5,184.4 270.1,190.4 269.4,190.9 273.1,195.1M269.5,184.4 270.6,181.9 272.4,179.4M249.2,192.8 246.8,192.8 248.0,205.7 248.5,207.2 242.8,207.2 240.5,207.8 239.6,207.0 238.6,208.2 236.8,206.3 235.4,205.6 232.5,206.3M262.0,201.8 262.0,205.1 261.0,207.3 257.8,207.5 256.3,208.1 255.0,207.8 253.2,209.1 251.7,209.8 249.9,210.6 248.2,214.6 247.5,214.9 244.8,214.9 244.2,213.8 243.2,211.7 241.4,212.0 239.8,211.7 238.6,208.2M256.3,208.1 257.4,210.3 259.1,211.7 261.1,212.7 261.8,210.1 265.7,210.7 268.5,211.0 270.2,210.4 273.5,210.7 275.3,209.8 275.2,208.7 278.0,205.1 278.2,200.5 277.3,195.9M290.1,201.2 290.1,206.9 288.6,207.0 287.6,210.9 288.6,213.9 285.9,215.9 283.0,216.6 279.5,218.7 278.0,218.8 275.9,215.2 277.3,213.8 276.2,211.7 275.3,209.8M276.2,211.7 274.8,215.2 273.1,218.1 270.9,219.5 268.8,221.7 268.2,222.7M261.1,212.7 260.0,216.6 259.8,220.4M258.3,220.7 258.0,215.9 257.3,213.8M257.7,220.8 256.7,217.4 256.0,213.8M251.9,222.2 252.2,215.9 252.0,213.8M259.1,211.7 257.3,213.8 256.0,213.8 252.0,213.8 252.0,215.5 248.2,214.6M245.3,223.2 244.1,220.2 244.2,218.7 244.8,214.9M239.6,219.7 241.4,217.4 244.1,218.7M237.1,216.6 240.4,215.2 241.4,217.4M234.7,213.8 236.5,212.7 236.5,211.4 239.8,211.7M232.2,211.9 236.5,211.4M288.6,213.9 289.4,217.1 291.8,218.4 295.0,222.4M289.4,217.1 291.6,214.8 295.8,215.9 298.7,215.2 301.5,212.3 302.9,215.2 304.4,215.9M310.9,203.5 308.6,205.0 307.8,208.8 307.2,211.3 305.8,213.8 304.4,215.9 302.9,218.1 305.4,219.9 307.1,223.0M307.8,208.8 310.0,208.4 312.9,208.7 316.3,211.6 315.4,213.8 317.2,213.8 318.6,216.6 322.8,218.1 324.3,218.1 320.0,222.4 315.6,223.9M307.1,223.0 308.3,223.2 310.0,224.4 312.2,224.7 315.6,223.9 314.3,225.5 314.3,230.6 315.2,231.9M295.0,222.4 297.2,223.2 299.8,224.5 304.4,223.5 307.1,223.0M304.4,223.5 305.1,228.1 304.4,229.5 304.2,230.9 309.5,233.8 311.8,236.2M299.8,224.5 300.5,226.4 298.2,230.4 298.1,231.5 297.8,235.9 298.1,238.5 299.7,241.3 302.8,242.9 304.4,243.1M304.2,230.9 299.4,230.9 298.1,231.5M295.0,222.4 291.6,222.4 288.0,223.5 283.7,222.4 282.5,224.5M278.0,218.8 276.6,221.0 276.8,223.1 278.8,226.4 282.5,224.5 281.3,229.5 279.0,232.6 278.5,235.2 274.5,236.2 273.4,237.8M269.9,226.2 272.1,226.4 274.9,226.4 278.8,226.4M274.9,226.4 276.6,227.5 276.6,230.4 275.6,233.1 272.5,232.8 271.8,235.1M273.4,237.8 274.5,237.9 279.6,237.9 280.2,240.2 283.7,239.5 287.0,239.9 287.3,245.2 290.1,245.2 290.1,248.1 287.3,248.1 287.3,252.9 289.3,254.9M272.8,254.5 275.9,254.6 282.3,254.6 289.3,254.9 292.0,255.2M290.1,245.2 292.0,245.5 293.0,246.5 295.8,247.3 297.2,248.7 298.4,247.0 296.4,242.8 299.7,241.3M302.8,242.9 303.2,247.6 302.9,249.6 299.0,251.1M292.0,255.2 294.4,255.4 297.1,252.6 299.2,252.0 299.0,251.1M305.4,246.0 310.0,245.7 313.5,244.5M304.4,243.1 305.4,246.0 305.8,249.6 306.9,252.6 306.1,254.0 305.1,253.0 302.9,249.6M299.2,252.0 302.8,253.6 302.8,257.0 302.2,260.5 300.5,262.2 301.5,265.5 301.5,269.1 302.8,269.2M289.3,254.9 285.9,256.0 285.9,261.6 284.4,261.6 284.4,265.9 284.4,271.7M279.5,272.0 280.9,272.1 284.4,271.7M284.4,265.9 287.3,268.3 288.7,266.7 292.4,267.2 294.4,264.1 297.8,261.9 300.5,262.2M292.0,255.2 293.0,257.8 295.4,259.3 297.8,261.9M294.5,273.6 296.5,272.0 297.8,273.6 296.4,275.2 294.5,273.6M243.5,163.8 244.3,163.6 246.8,163.8 247.2,164.3 246.2,165.5 246.0,167.9 245.3,168.3 246.0,170.6 245.5,172.4M253.4,160.9 257.0,162.0 260.6,162.8M266.7,160.1 266.0,159.3 265.8,157.5 266.0,155.9 264.7,155.2 265.8,153.0 266.8,152.3 267.7,149.3 265.1,148.2 264.2,148.2 262.0,147.1 259.6,144.7M260.8,144.0 263.1,144.0 264.4,144.9 264.7,146.9 265.1,148.2M264.4,144.9 265.7,142.6 266.2,139.8M268.4,135.7 270.1,135.9M276.2,138.1 276.8,141.5 277.3,144.9 273.4,146.5 275.6,149.8 274.3,152.1 270.8,152.5 269.7,152.5 266.8,152.3M269.7,152.5 269.5,153.6 270.9,153.8 268.8,155.7 266.0,155.9M270.9,153.8 273.4,153.6 275.5,154.6 278.9,154.0 280.3,151.5M275.6,149.8 277.3,149.3 280.0,150.0 280.3,151.5M277.3,144.9 279.2,145.8 282.7,148.2 288.0,149.1M282.7,148.2 280.3,151.5 282.7,151.9 285.2,150.4 287.4,150.6M288.0,149.1 290.1,145.4 289.6,142.6 290.0,138.1 288.4,136.9 284.2,136.9M288.4,136.9 288.4,135.4 286.0,134.7M290.0,138.1 292.7,137.4 293.8,133.7 291.6,131.9 286.0,132.7M290.6,128.0 295.0,129.0 295.8,123.6M293.8,133.7 296.1,132.4 295.0,129.0M289.6,143.8 299.5,144.2 301.2,142.4 302.5,139.3 299.9,133.9 296.1,132.4M301.2,142.4 304.9,143.3 306.6,146.3 310.3,147.4 313.0,148.0 312.6,151.7 310.3,153.4M288.0,149.1 287.4,150.6 291.4,152.1 293.8,150.8 296.1,155.7 296.1,156.7 298.2,157.3M293.8,150.8 297.5,151.5 298.7,154.8M287.4,150.6 286.2,154.8 284.9,155.4 282.7,155.9 279.6,154.6 278.9,154.0M284.9,155.4 286.4,158.1 288.3,159.3 291.6,160.3 294.4,159.5 296.7,160.3M288.3,159.3 287.9,163.0 288.7,164.9 293.4,164.1 295.8,163.6M293.4,164.1 293.0,166.0M284.4,167.9 285.9,165.8 288.7,164.9M283.6,163.8 285.2,163.2 285.9,165.8M285.2,163.2 287.9,163.0M275.3,156.7 277.8,156.7 279.6,154.6M278.5,157.3 283.0,157.7 283.6,157.9 283.6,160.7 282.3,162.6M283.6,160.7 285.2,163.2M278.5,157.3 278.8,159.7 281.0,161.6M283.0,157.7 283.2,155.9M271.9,125.0 273.8,119.3 273.2,111.3 276.6,103.3 279.5,96.0 285.2,92.1 292.6,92.1 293.0,88.1 296.5,88.1 297.2,91.4 299.8,88.9M290.3,104.0 289.7,96.4 285.2,92.1M297.2,91.4 298.7,104.4 300.8,113.5 295.5,120.8M245.6,135.4 244.6,136.7 247.0,137.7M307.3,174.6 308.6,173.3 316.2,172.4 319.7,172.4 318.6,168.4 319.7,167.9M315.0,164.5 317.9,165.3 318.0,167.1 319.7,167.9 322.1,169.4 324.3,167.9 325.5,170.3M312.9,160.9 318.3,162.4 322.1,163.8 325.1,163.9M317.9,165.3 320.0,164.9 322.1,163.8M320.0,164.9 322.1,169.4M316.2,172.4 314.6,176.6 311.2,179.1 307.2,180.2M311.2,179.1 311.8,181.1 308.6,182.3 310.0,183.9 309.3,184.7 307.2,186.0 305.8,185.7M304.8,182.6 305.6,185.6M306.6,180.2 306.5,182.3 305.8,185.6M305.9,179.6 307.1,179.2 308.1,177.7 307.2,177.0M311.8,181.1 315.7,183.1 319.6,186.0 322.1,186.2 324.1,184.7M322.1,186.2 323.6,187.2 324.8,187.2M319.7,172.4 321.4,174.9 320.6,178.0 323.8,183.1 325.0,184.7M316.9,205.9 318.6,204.4 322.8,205.0 330.0,202.0 334.2,200.5 335.2,197.4 334.5,196.3 330.8,196.0 329.4,194.0M334.5,196.3 335.6,193.5 336.2,191.3M330.0,202.0 331.5,205.6M332.7,172.3 337.1,170.6 340.3,171.9 343.0,173.5 342.2,178.0 342.6,182.3 343.9,183.1 342.6,185.1 345.6,189.6 343.6,192.4M342.6,185.1 349.9,185.6 354.6,181.6 355.6,178.0 357.7,173.7 362.5,172.4M343.0,173.5 347.7,173.7 350.6,172.1 352.7,172.8 357.7,171.0 357.7,173.3 362.5,172.4M326.4,155.0 322.8,151.5 322.8,147.1 327.1,143.3 332.8,144.9 339.9,145.6 343.5,144.9 342.8,139.1 348.4,136.7 354.1,134.7 357.0,137.4 361.2,138.9 364.8,137.4 369.8,144.9 374.0,144.9 376.9,147.6 380.2,148.9 377.9,153.2 374.0,153.4 373.2,157.1 370.1,157.7 370.2,163.2 362.7,161.8 357.0,162.6 356.8,163.2 352.7,166.0 349.9,165.5 349.9,161.6 342.8,159.1 339.2,156.7 335.6,157.7 335.6,164.9 332.8,163.0 330.7,164.1M335.6,164.9 339.2,162.2 341.3,164.7 344.2,168.3 347.7,169.4 350.6,172.1M370.2,163.2 364.1,166.6 360.8,168.3 362.5,172.4M356.8,163.2 357.7,164.9 359.8,165.8 355.6,167.0 354.6,168.3 360.8,168.3M354.6,168.3 352.4,168.8 352.7,172.8M380.9,148.9 386.8,145.4 395.4,142.6 401.1,144.2 406.8,146.5 413.9,148.5 422.0,147.6M380.9,148.9 385.4,154.6 385.3,157.3 391.8,159.3 393.1,162.2 400.4,162.6 405.3,164.3 412.4,162.2 415.3,160.3 415.1,157.7 420.4,156.7 426.4,154.2 425.2,152.5 421.0,151.7 423.8,151.5 422.0,147.6M422.0,147.6 426.7,141.2 428.1,139.6 434.5,140.3 437.3,147.1 441.9,149.8 447.6,150.6 445.2,157.7 442.7,160.9 441.7,162.8 438.0,164.5 435.2,165.5 432.8,167.5M436.2,171.4 438.6,169.9M353.0,194.8 357.0,193.4 355.6,188.8 361.1,184.7 362.0,180.6 366.6,175.4M362.5,172.4 366.6,175.4 368.4,179.7 367.9,182.8 371.2,184.4 375.5,186.5 381.3,188.2 386.8,188.3 391.1,186.0 394.4,187.7M371.2,184.4 369.9,186.7 374.5,189.0 378.0,190.2 381.3,190.5 381.3,188.2M381.3,190.5 382.3,193.9 382.6,197.6M381.3,190.5 383.7,191.2 387.4,192.8 385.7,194.9 387.3,198.9M394.4,187.7 391.1,191.2 390.5,193.2 388.7,194.5 387.8,198.5M394.4,187.7 396.4,188.8 395.0,194.3 396.8,197.3 399.9,198.6 401.2,196.8 405.8,195.4 407.8,196.2 409.6,198.2M399.9,198.6 398.4,199.9 395.1,202.7 396.2,206.0 395.7,207.9 397.1,211.4 396.2,215.2M401.2,196.8 403.9,199.9 405.3,202.4 409.0,208.4 409.0,211.9 406.5,212.9 404.6,214.6M398.4,199.9 399.6,204.1 401.2,203.2 403.9,203.2 405.0,205.9 406.2,208.8 409.0,208.4M402.3,212.7 401.6,210.0 405.0,208.8 406.2,208.8M398.4,220.4 401.2,220.7M411.9,226.7 415.0,228.2 419.3,227.4 420.8,223.4 423.3,223.5M456.5,233.2 456.5,242.5M80.6,149.3 120.6,149.3 121.5,150.0 128.6,151.5 130.3,150.8 135.4,153.8 135.4,154.6 137.4,155.7 138.7,157.1 138.8,161.6 137.8,163.4 143.6,162.0 143.4,160.9 146.8,160.5 149.3,157.7 154.3,157.7 156.0,154.6 157.6,152.5 159.6,153.4 159.6,156.3 160.7,157.9M55.5,89.7 55.5,121.3 58.3,122.2 60.4,125.3 63.3,122.8 66.3,126.6 68.6,131.4 71.1,133.2 71.0,135.4M89.5,180.6 92.7,180.6 98.1,182.6 102.1,182.6 102.1,181.8 104.5,181.8 107.4,185.4 109.2,186.4 110.4,185.1 111.8,185.1 114.5,188.8 115.1,190.5 117.8,191.3M124.9,208.7 124.9,207.5 125.6,206.3 127.4,206.3 126.6,204.7 126.6,203.8 129.1,203.8 129.1,206.6 130.6,206.9M129.1,203.8 130.4,202.7M127.9,209.8 128.9,208.8 129.1,206.6M128.9,208.8 131.1,210.3M131.8,210.9 133.7,209.7 135.4,208.2 137.7,207.9M134.1,213.6 137.0,213.9M138.1,217.9 138.5,215.8M145.2,219.2 145.9,217.1M154.6,212.6 152.9,213.6 152.2,216.4 153.0,218.9 156.4,219.5 160.0,220.7 159.6,223.8 160.7,227.8 156.4,227.1 157.3,227.9 156.6,235.5M156.6,235.5 155.3,232.8 152.2,232.8 149.0,229.6 145.8,228.9 143.9,227.5M149.0,229.6 148.5,231.6 144.8,234.3 143.6,236.6 141.8,234.3M156.6,235.5 152.2,236.6 151.0,239.9 152.3,242.9 155.6,243.1 155.6,245.2 157.0,245.2 158.3,247.4 157.9,251.1 157.2,254.8 155.9,256.0M157.0,245.2 163.1,243.5 163.1,246.3 167.8,248.9 170.2,249.3 170.4,253.0 173.1,253.0 174.2,255.8 173.2,258.2 173.2,258.8 168.1,257.9 166.8,261.9 164.6,262.8 161.8,261.3 160.4,262.8M157.2,254.8 158.6,257.8 159.0,260.8 160.4,262.8 158.7,265.5 158.9,269.4 156.7,274.3 156.4,279.3 155.7,284.4 155.0,289.8 153.9,297.4 154.0,303.3 152.3,309.7 153.2,314.1 158.7,317.1M158.4,318.0 158.4,323.3M173.2,258.8 173.8,261.7 176.8,262.0 177.2,264.7 178.8,264.8 178.3,267.2M166.8,261.9 170.7,264.7 174.1,266.9 172.7,269.7 176.4,269.9 178.3,267.2 179.5,269.7 176.6,271.5 174.1,274.6 176.5,275.7 179.9,278.6 180.1,280.5M174.1,274.6 173.2,278.4 172.9,281.0M160.7,227.8 162.8,228.4 165.0,226.4 164.7,223.7 168.5,223.4 169.7,222.1 168.7,221.1 169.7,218.8 170.7,217.5M169.7,222.1 170.7,222.4 171.0,223.2 171.4,227.1 174.9,226.7 175.6,226.8 178.3,226.2 180.8,226.4 182.5,223.5M174.6,221.1 173.5,223.8 175.6,226.8M179.2,221.2 178.3,226.2" fill="none" stroke="#b08e8a" stroke-width="1.5" stroke-opacity="0.72" stroke-linejoin="round"/>
</svg>
<!--/MAP-->
<div class="t" style="left:257px;top:427px;font-weight:bold;font-size:11px;letter-spacing:0.05px;color:#333" id="cp">© PTV, HERE, p17 GmbH</div>

<svg class="abs" style="left:262px;top:452px" width="320" height="70" viewBox="263 453 320 70">
 <circle cx="298.5" cy="487.4" r="28" fill="none" stroke="#3c3c3c" stroke-width="3.2"/>
 <path d="M298.5 468.5L303.5 474H293.500Z M298.5 506L303.5 500.500H293.500Z M280 487.400L285.500 482.400V492.400Z M317 487.400L311.500 482.400V492.400Z" fill="#3c3c3c"/>
 <circle cx="364.3" cy="487.400" r="13.8" fill="none" stroke="#3c3c3c" stroke-width="2.3"/>
 <path d="M357 487.400H371.500" stroke="#3c3c3c" stroke-width="2.6"/>
 <rect x="383" y="479" width="6.500" height="19" fill="#3c3c3c"/>
 <path d="M392 487.800H526" stroke="#3c3c3c" stroke-width="3"/>
 <circle cx="548.6" cy="487.400" r="13.8" fill="none" stroke="#3c3c3c" stroke-width="2.3"/>
 <path d="M541.500 487.400H555.700M548.600 480.300V494.500" stroke="#3c3c3c" stroke-width="2.6"/>
</svg>
<div class="t" style="left:690px;top:475px;font-size:20px;letter-spacing:0;line-height:24px;height:24px;color:#333" id="c1">82.6°S</div>
<div class="t" style="left:772px;top:475px;font-size:20px;letter-spacing:0;line-height:24px;height:24px;color:#333" id="c2">180.0°W</div>
<div class="abs" style="left:646px;top:506px;width:220px;height:18px;background:#fafafa"></div>
<div class="t" style="left:648px;top:508px;letter-spacing:-0.3px" id="bl">Background &amp; Labels</div>
<div class="abs" style="left:853.5px;top:514px;width:0;height:0;border-left:3.5px solid transparent;border-right:3.5px solid transparent;border-top:4px solid #6e6e6e"></div>

<div class="btn" style="left:668px;top:534px;width:100px;height:30px;border:2px solid #1d4f8f">
 <div class="abs" style="left:1px;top:1px;right:1px;bottom:1px;border:1px dotted #444"></div>
 <svg class="abs" style="left:3px;top:3px" width="24" height="22" viewBox="672 538 24 22"><path d="M676.300 549.300L682 555L692.600 542.400" fill="none" stroke="#6a9f85" stroke-width="5.200"/></svg>
 <div class="t" style="left:30.500px;top:7px;letter-spacing:-0.35px" id="b2">Übernehmen</div>
</div>
<div class="btn" style="left:774px;top:534px;width:100px;height:30px">
 <svg class="abs" style="left:3px;top:3px" width="24" height="24" viewBox="778 538 24 24"><path d="M782.200 542.300L798.200 558M798.200 542.300L782.200 558" fill="none" stroke="#e5889c" stroke-width="5.400"/></svg>
 <div class="t" style="left:36px;top:8px;letter-spacing:-0.3px" id="b3">Abbrechen</div>
</div>
<svg class="abs" style="left:874px;top:564px" width="12" height="12" viewBox="0 0 12 12" fill="#b0b0b0"><rect x="9" y="1" width="2" height="2"/><rect x="5" y="5" width="2" height="2"/><rect x="9" y="5" width="2" height="2"/><rect x="1" y="9" width="2" height="2"/><rect x="5" y="9" width="2" height="2"/><rect x="9" y="9" width="2" height="2"/></svg>
</div>
</body></html>
